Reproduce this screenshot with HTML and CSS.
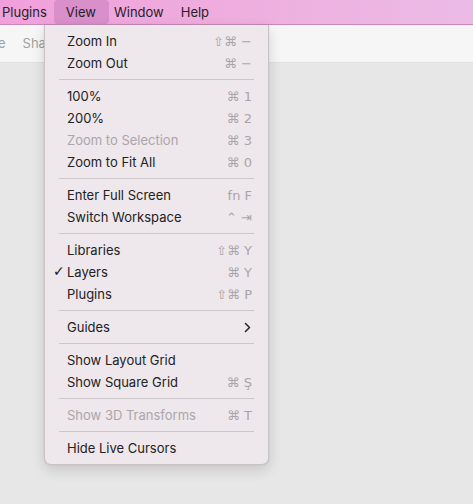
FILE: index.html
```html
<!DOCTYPE html>
<html>
<head>
<meta charset="utf-8">
<link rel="stylesheet" href="styles.css">
</head>
<body>
<div class="menubar">
  <span class="mb-item">Plugins</span>
  <span class="mb-item active">View</span>
  <span class="mb-item">Window</span>
  <span class="mb-item">Help</span>
</div>
<div class="toolbar">
  <span class="tb-text">e</span>
  <span class="tb-text">Sha</span>
</div>
<div class="canvas"></div>

<div class="menu">
  <div class="row"><span class="label">Zoom In</span><span class="sc">⇧⌘ −</span></div>
  <div class="row"><span class="label">Zoom Out</span><span class="sc">⌘ −</span></div>
  <div class="sep"></div>
  <div class="row"><span class="label">100%</span><span class="sc">⌘ 1</span></div>
  <div class="row"><span class="label">200%</span><span class="sc">⌘ 2</span></div>
  <div class="row disabled"><span class="label">Zoom to Selection</span><span class="sc">⌘ 3</span></div>
  <div class="row"><span class="label">Zoom to Fit All</span><span class="sc">⌘ 0</span></div>
  <div class="sep"></div>
  <div class="row"><span class="label">Enter Full Screen</span><span class="sc">fn F</span></div>
  <div class="row"><span class="label">Switch Workspace</span><span class="sc">⌃ ⇥</span></div>
  <div class="sep"></div>
  <div class="row"><span class="label">Libraries</span><span class="sc">⇧⌘ Y</span></div>
  <div class="row"><span class="check">✓</span><span class="label">Layers</span><span class="sc">⌘ Y</span></div>
  <div class="row"><span class="label">Plugins</span><span class="sc">⇧⌘ P</span></div>
  <div class="sep"></div>
  <div class="row"><span class="label">Guides</span><span class="chev"><svg width="7" height="11" viewBox="0 0 7 11"><path d="M1.5 1.5 L5.5 5.5 L1.5 9.5" fill="none" stroke="#2a2a2a" stroke-width="1.6" stroke-linecap="round" stroke-linejoin="round"/></svg></span></div>
  <div class="sep"></div>
  <div class="row"><span class="label">Show Layout Grid</span></div>
  <div class="row"><span class="label">Show Square Grid</span><span class="sc">⌘ Ş</span></div>
  <div class="sep"></div>
  <div class="row disabled"><span class="label">Show 3D Transforms</span><span class="sc">⌘ T</span></div>
  <div class="sep"></div>
  <div class="row"><span class="label">Hide Live Cursors</span></div>
</div>
</body>
</html>
```
FILE: styles.css
```css
* { box-sizing: border-box; }
html, body {
  margin: 0;
  padding: 0;
  width: 473px;
  height: 504px;
  overflow: hidden;
  background: #e7e7e7;
  font-family: "Inter", "Liberation Sans", Arial, sans-serif;
  font-size: 13px;
  color: #222;
}
.menubar {
  height: 25px;
  display: flex;
  align-items: stretch;
  background: linear-gradient(90deg, #f19fdb 0%, #eeaede 50%, #ebbbe6 100%);
  border-bottom: 1px solid #c98ab9;
  padding-left: 2px;
}
.mb-item {
  display: flex;
  align-items: center;
  font-size: 13px;
  color: #262226;
}
.mb-item:first-child { margin-right: 7px; }
.mb-item.active {
  background: #d98fca;
  border-radius: 4px;
  padding: 0 13px 0 12px;
  margin: 0 5px 0 0;
}
.mb-item:nth-child(3) { margin-right: 17px; }
.toolbar {
  height: 38px;
  background: #f6f6f6;
  border-bottom: 1px solid #e0e0e0;
  display: flex;
  align-items: center;
  gap: 17px;
  padding-left: 0;
  padding-bottom: 2px;
}
.tb-text {
  color: #a0a0a0;
  font-size: 13px;
}
.tb-text:first-child { margin-left: -2px; }
.menu {
  position: absolute;
  left: 44px;
  top: 25px;
  width: 225px;
  padding: 5px 0;
  background: #eee7ec;
  border: 1px solid #c9c3c8;
  border-top: none;
  border-radius: 0 0 7px 7px;
  box-shadow: 0 5px 14px rgba(0,0,0,0.14), 0 0 2px rgba(0,0,0,0.10);
}
.row {
  position: relative;
  height: 22px;
  display: flex;
  align-items: center;
  padding: 0 16px 0 22px;
}
.label {
  flex: 1;
  color: #222;
  white-space: nowrap;
}
.disabled .label { color: #aba6aa; }
.sc {
  color: #aaa5a9;
  font-family: "DejaVu Sans", "Liberation Sans", sans-serif;
  font-size: 13px;
  white-space: nowrap;
}
.check {
  position: absolute;
  left: 8px;
  top: 2px;
  font-family: "DejaVu Sans", sans-serif;
  font-size: 14px;
  font-weight: bold;
  color: #222;
}
.chev {
  display: flex;
  align-items: center;
  margin-right: 1px;
}
.sep {
  height: 1px;
  background: #cdc8cc;
  margin: 5px 14px 5px 14px;
}
```
